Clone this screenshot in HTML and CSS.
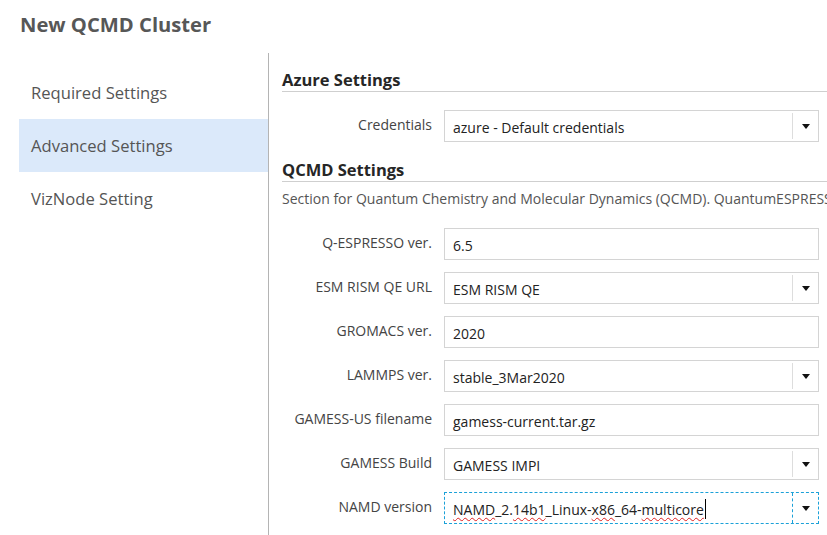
FILE: index.html
```html
<!DOCTYPE html>
<html lang="en">
<head>
<meta charset="utf-8">
<title>New QCMD Cluster</title>
<link rel="stylesheet" href="styles.css">
</head>
<body>
<div class="page">
  <h1 class="title">New QCMD Cluster</h1>
  <div class="content">
    <nav class="sidebar">
      <div class="nav-item">Required Settings</div>
      <div class="nav-item active">Advanced Settings</div>
      <div class="nav-item">VizNode Setting</div>
    </nav>
    <main class="panel">
      <h2 class="section-title">Azure Settings</h2>
      <div class="row first">
        <label class="label">Credentials</label>
        <div class="field select"><span class="value">azure - Default credentials</span><span class="arrow-box"><span class="arrow"></span></span></div>
      </div>

      <h2 class="section-title qcmd">QCMD Settings</h2>
      <p class="desc">Section for Quantum Chemistry and Molecular Dynamics (QCMD). QuantumESPRESSO, GROMACS, LAMMPS, GAMESS and NAMD are installed.</p>

      <div class="rows">
        <div class="row">
          <label class="label">Q-ESPRESSO ver.</label>
          <div class="field"><span class="value">6.5</span></div>
        </div>
        <div class="row">
          <label class="label">ESM RISM QE URL</label>
          <div class="field select"><span class="value">ESM RISM QE</span><span class="arrow-box"><span class="arrow"></span></span></div>
        </div>
        <div class="row">
          <label class="label">GROMACS ver.</label>
          <div class="field"><span class="value">2020</span></div>
        </div>
        <div class="row">
          <label class="label">LAMMPS ver.</label>
          <div class="field select"><span class="value">stable_3Mar2020</span><span class="arrow-box"><span class="arrow"></span></span></div>
        </div>
        <div class="row">
          <label class="label">GAMESS-US filename</label>
          <div class="field"><span class="value">gamess-current.tar.gz</span></div>
        </div>
        <div class="row">
          <label class="label">GAMESS Build</label>
          <div class="field select"><span class="value">GAMESS IMPI</span><span class="arrow-box"><span class="arrow"></span></span></div>
        </div>
        <div class="row">
          <label class="label">NAMD version</label>
          <div class="field select focused"><span class="value"><span class="misspelled">NAMD</span>_2.<span class="misspelled">14b1</span>_Linux-<span class="misspelled">x86</span>_64-<span class="misspelled">multicore</span><span class="caret"></span></span><span class="arrow-box"><span class="arrow"></span></span></div>
        </div>
      </div>
    </main>
  </div>
</div>
</body>
</html>
```
FILE: styles.css
```css
* { box-sizing: border-box; }

html, body {
  margin: 0;
  padding: 0;
  background: #ffffff;
}

body {
  font-family: "Open Sans", "Noto Sans", sans-serif;
  color: #444444;
  overflow: hidden;
}

.page {
  width: 827px;
  height: 535px;
  display: flex;
  flex-direction: column;
}

.title {
  margin: 0;
  padding: 10px 0 15px 20px;
  height: 53px;
  font-size: 20.2px;
  line-height: 28px;
  font-weight: 700;
  color: #575757;
}

.content {
  flex: 1;
  display: flex;
  min-height: 0;
}

.sidebar {
  width: 250px;
  margin-left: 19px;
  padding-top: 13px;
  border-right: 1px solid #b4b4b4;
  flex-shrink: 0;
}

.nav-item {
  height: 53px;
  display: flex;
  align-items: center;
  padding-left: 12px;
  font-size: 16.6px;
  color: #555555;
}

.nav-item.active {
  background: #dbe9fa;
}

.panel {
  flex: 1;
  min-width: 0;
  overflow: hidden;
  padding: 15px 0 0 13px;
}

.section-title {
  margin: 0;
  font-size: 16.5px;
  line-height: 23px;
  font-weight: 700;
  color: #262626;
  border-bottom: 1px solid #cfcfcf;
  white-space: nowrap;
}

.section-title.qcmd {
  margin-top: 16px;
}

.row {
  display: grid;
  grid-template-columns: 150px 375px;
  column-gap: 12px;
  align-items: center;
  height: 32px;
}

.row.first {
  margin-top: 18px;
}

.rows {
  display: flex;
  flex-direction: column;
  gap: 12px;
}

.label {
  text-align: right;
  font-size: 14px;
  line-height: 19px;
  color: #444444;
  white-space: nowrap;
  padding-bottom: 4px;
}

.desc {
  margin: 7px 0 19px 0;
  font-size: 14px;
  line-height: 20px;
  color: #555555;
  white-space: nowrap;
}

.field {
  height: 32px;
  border: 1px solid #d4d4d4;
  background: #ffffff;
  display: flex;
  align-items: center;
  font-size: 14px;
  color: #222222;
}

.value {
  flex: 1;
  padding-left: 8px;
  padding-top: 2px;
  white-space: nowrap;
  display: flex;
  align-items: center;
}

.arrow-box {
  width: 26px;
  height: 26px;
  border-left: 1px solid #dddddd;
  display: flex;
  align-items: center;
  justify-content: center;
  padding-left: 1px;
}

.arrow {
  width: 0;
  height: 0;
  border-left: 4.5px solid transparent;
  border-right: 4.5px solid transparent;
  border-top: 5px solid #111111;
}

.field.focused {
  border: 1px dashed #1ba1d8;
}

.field.focused .arrow-box {
  height: 30px;
  border-left: 1px dashed #1ba1d8;
}

.misspelled {
  text-decoration: underline wavy #e02020;
  text-decoration-thickness: 1px;
  text-underline-offset: 2px;
}

.caret {
  display: inline-block;
  width: 1px;
  height: 20px;
  background: #000000;
  margin-left: 1px;
}
```
